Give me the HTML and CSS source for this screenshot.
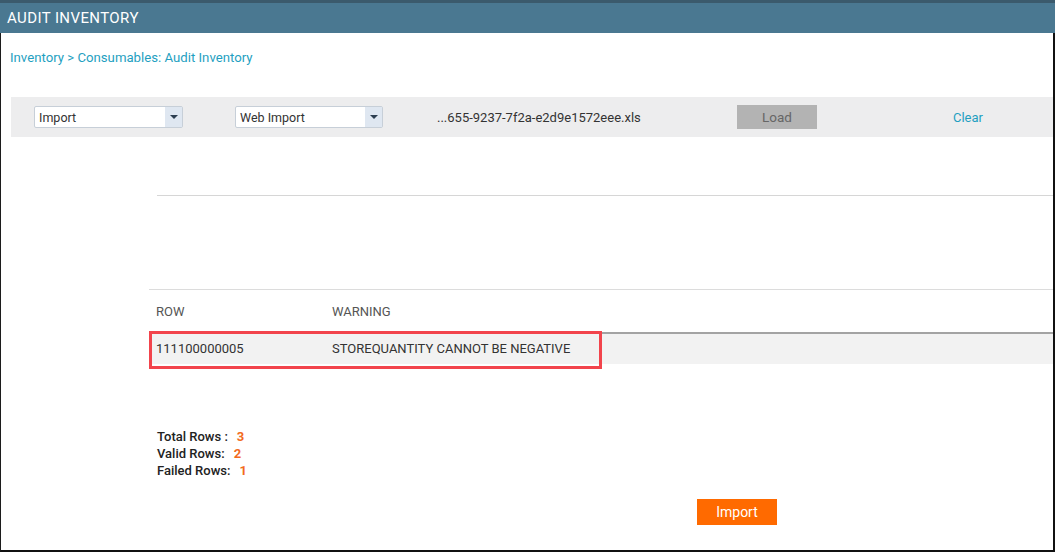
FILE: index.html
```html
<!DOCTYPE html>
<html lang="en">
<head>
  <meta charset="UTF-8">
  <title>Audit Inventory</title>
  <link rel="stylesheet" href="styles.css">
</head>
<body>

  <div class="header">AUDIT INVENTORY</div>

  <div class="page">
    <div class="breadcrumb">Inventory &gt; Consumables: Audit Inventory</div>

    <div class="toolbar">
      <div class="select first">
        <span class="select-text">Import</span>
        <span class="select-arrow"></span>
      </div>
      <div class="select second">
        <span class="select-text">Web Import</span>
        <span class="select-arrow"></span>
      </div>
      <span class="filename">...655-9237-7f2a-e2d9e1572eee.xls</span>
      <button class="load">Load</button>
      <a class="clear">Clear</a>
    </div>

    <div class="divider"></div>

    <div class="results">
      <div class="row head">
        <div class="col-row">ROW</div>
        <div class="col-warning">WARNING</div>
      </div>
      <div class="row data">
        <div class="col-row">111100000005</div>
        <div class="col-warning">STOREQUANTITY CANNOT BE NEGATIVE</div>
        <div class="highlight"></div>
      </div>
    </div>

    <div class="summary">
      <div>Total Rows :<span class="count">3</span></div>
      <div>Valid Rows:<span class="count">2</span></div>
      <div>Failed Rows:<span class="count">1</span></div>
    </div>

    <button class="import">Import</button>
  </div>

</body>
</html>
```

FILE: styles.css
```css
body {
  margin: 0;
  font-family: Roboto, Arial, sans-serif;
  background: #fff;
  width: 1055px;
  height: 552px;
  overflow: hidden;
}

.header {
  background: #4a7891;
  border-top: 3px solid #3b5a6c;
  height: 30px;
  line-height: 30px;
  color: #fff;
  font-size: 15px;
  letter-spacing: 0.4px;
  padding-left: 7px;
}

.page {
  height: 519px;
  box-sizing: border-box;
  border-left: 1px solid #1c1c1c;
  border-right: 2px solid #111;
  border-bottom: 2px solid #111;
  padding-top: 18px;
}

.breadcrumb {
  color: #1f9fc1;
  font-size: 13.2px;
  line-height: 14px;
  padding-left: 9px;
}

.toolbar {
  margin: 32px 0 0 10px;
  height: 40px;
  background: #ededee;
  display: flex;
  align-items: center;
  font-size: 12.5px;
  color: #333;
}

.select {
  display: flex;
  height: 22px;
  box-sizing: border-box;
  background: #fff;
  border: 1px solid #c7cfd8;
  border-radius: 2px;
}

.select.first {
  width: 149px;
  margin-left: 23px;
}

.select.second {
  width: 148px;
  margin-left: 52px;
}

.select-text {
  flex: 1;
  line-height: 21px;
  padding-left: 4px;
}

.select-arrow {
  width: 17px;
  background: #dfe7f1;
  display: flex;
  align-items: center;
  justify-content: center;
}

.select-arrow::after {
  content: "";
  border-left: 4px solid transparent;
  border-right: 4px solid transparent;
  border-top: 4px solid #2c3e50;
}

.filename {
  margin-left: 54px;
  width: 300px;
  font-size: 13px;
}

.load {
  width: 80px;
  height: 24px;
  border: none;
  background: #b3b3b3;
  color: #666;
  font-family: inherit;
  font-size: 13.5px;
  padding: 0;
}

.clear {
  margin-left: 136px;
  color: #1f9fc1;
  font-size: 13px;
}

.divider {
  margin: 58px 0 0 156px;
  border-top: 1px solid #d6d6d6;
}

.results {
  margin: 93px 0 0 148px;
  border-top: 1px solid #dcdcdc;
  font-size: 13px;
  color: #444;
}

.row {
  display: flex;
  align-items: center;
}

.row.head {
  height: 42px;
  border-bottom: 2px solid #a3a3a3;
  color: #555;
}

.row.data {
  height: 30px;
  box-sizing: border-box;
  padding-bottom: 2px;
  background: #f2f2f2;
  position: relative;
  color: #333;
}

.col-row {
  width: 176px;
  padding-left: 7px;
}

.highlight {
  position: absolute;
  left: 0;
  top: -3px;
  width: 453px;
  height: 38px;
  box-sizing: border-box;
  border: 3px solid #f2444c;
}

.summary {
  margin: 64px 0 0 156px;
  font-size: 13px;
  line-height: 17px;
  font-weight: 500;
  color: #222;
}

.count {
  color: #f26b1d;
  font-weight: 700;
  margin-left: 9px;
}

.import {
  margin: 20px 0 0 696px;
  width: 80px;
  height: 26px;
  border: none;
  background: #ff6a00;
  color: #fff;
  font-family: inherit;
  font-size: 14px;
  padding: 0;
  display: block;
}
```
